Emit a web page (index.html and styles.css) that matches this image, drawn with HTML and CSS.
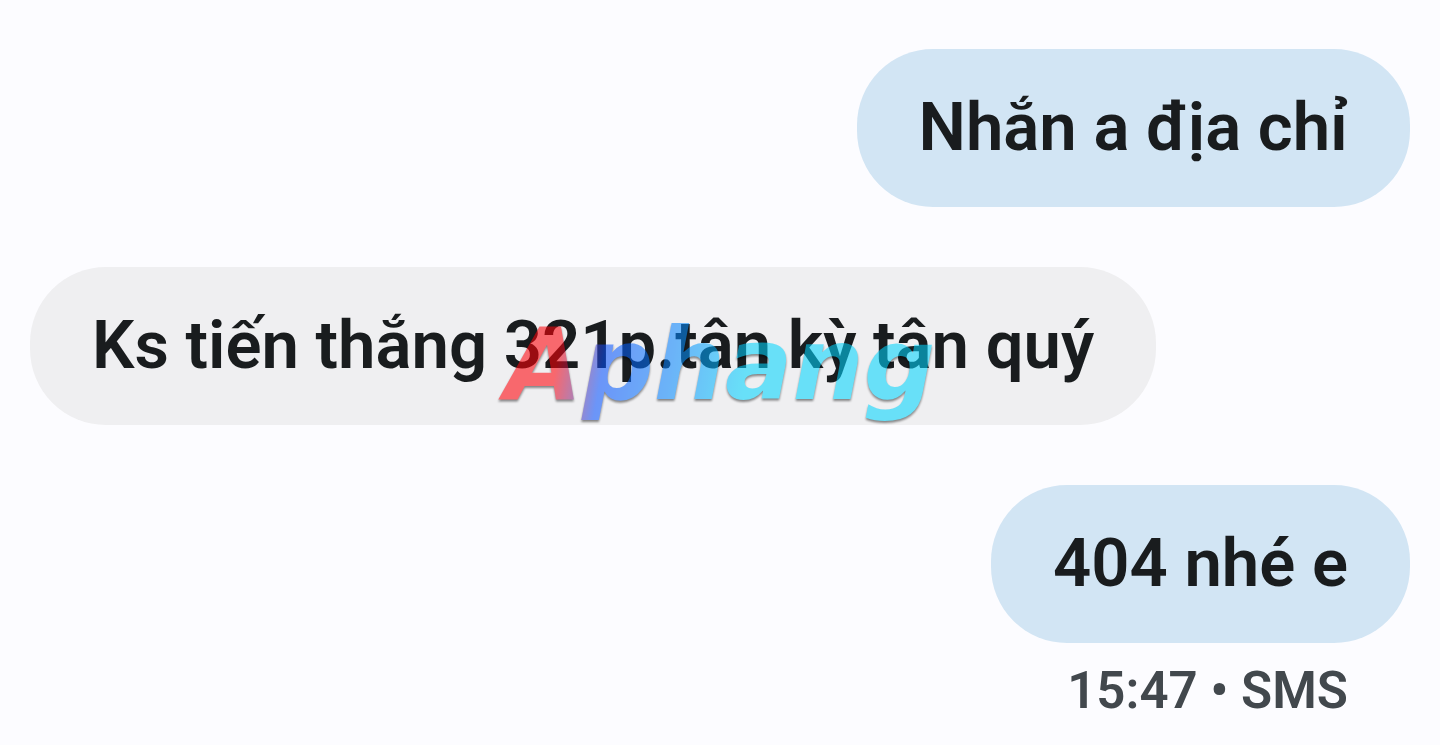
FILE: index.html
```html
<!DOCTYPE html>
<html lang="vi">
  <head>
    <meta charset="UTF-8" />
    <meta name="viewport" content="width=device-width, initial-scale=1.0" />
    <title>SMS</title>
    <link rel="stylesheet" href="styles.css">
  </head>
  <body>
    <main class="thread">
      <p class="bubble sent">Nhắn a địa chỉ</p>
      <div class="received-row">
        <p class="bubble received">Ks tiến thắng 321p.tân kỳ tân quý</p>
        <span class="watermark">Aphang</span>
      </div>
      <div class="sent-group">
        <p class="bubble sent">404 nhé e</p>
        <p class="meta"><time datetime="15:47">15:47</time> • SMS</p>
      </div>
    </main>
  </body>
</html>
```
FILE: styles.css
```css
body,
html {
  margin: 0;
  padding: 0;
}

body {
  background-color: #fcfcff;
  color: #191c1e;
  font-family: Roboto, "Liberation Sans", sans-serif;
}

.thread {
  display: flex;
  flex-direction: column;
  gap: 60px;
  padding: 49px 30px 0;
}

.bubble {
  margin: 0;
  padding: 33px 62px 35px;
  border-radius: 76px;
  font-size: 67px;
  line-height: 90px;
  font-weight: 600;
}

.sent {
  align-self: flex-end;
  background-color: #d2e5f4;
}

.received-row {
  display: flex;
  position: relative;
}

.received {
  background-color: #efeff1;
}

.sent-group {
  display: flex;
  flex-direction: column;
  gap: 18px;
}

/* Logo over the middle of the thread */
.watermark {
  position: absolute;
  top: 38px;
  left: 50%;
  transform: translateX(-50%);
  padding: 0 8px;
  font-family: "DejaVu Sans", sans-serif;
  font-size: 100px;
  line-height: 120px;
  font-weight: bold;
  font-style: italic;
  color: transparent;
  background: linear-gradient(100deg, #ff0008 15%, #0550ff 25%, #0587ff 40%, #00d5ff 56%);
  background-clip: text;
  -webkit-background-clip: text;
  filter: drop-shadow(0 2px 1px rgba(0, 0, 0, 0.8));
  opacity: 0.56;
}

.meta {
  align-self: flex-end;
  margin: 0 62px 0 0;
  font-size: 51px;
  line-height: 60px;
  font-weight: 600;
  color: #42484d;
}
```
